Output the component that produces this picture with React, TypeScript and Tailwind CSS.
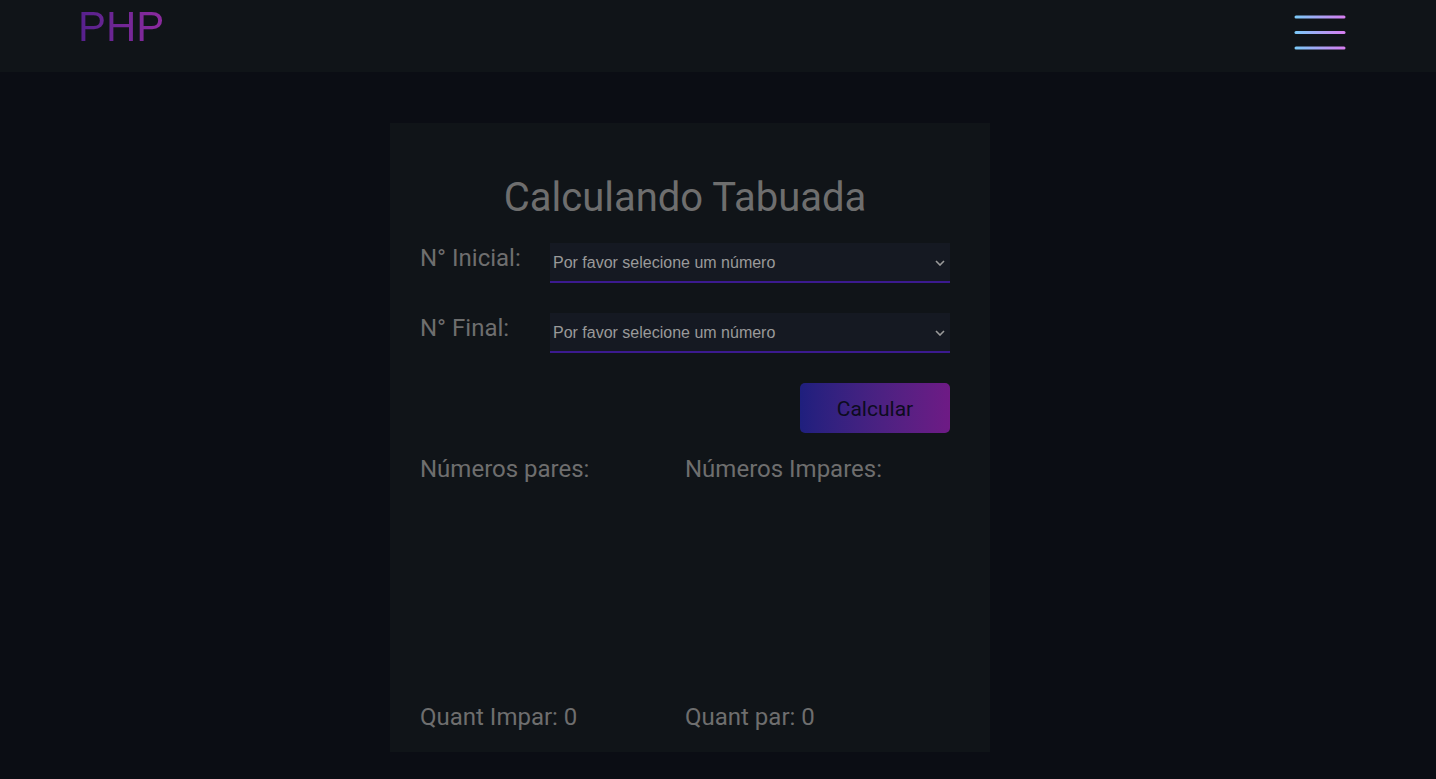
import React from "react";

function Burger() {
  return (
    <svg width="52" height="40" viewBox="0 0 52 40" className="block">
      <defs>
        <linearGradient id="burgerGrad" gradientUnits="userSpaceOnUse" x1="2" y1="0" x2="50" y2="0">
          <stop offset="0" stopColor="#7cc8f8" />
          <stop offset="1" stopColor="#d57ef0" />
        </linearGradient>
      </defs>
      <line x1="2" y1="5" x2="50" y2="5" stroke="url(#burgerGrad)" strokeWidth="3" strokeLinecap="round" />
      <line x1="2" y1="20.5" x2="50" y2="20.5" stroke="url(#burgerGrad)" strokeWidth="3" strokeLinecap="round" />
      <line x1="2" y1="36" x2="50" y2="36" stroke="url(#burgerGrad)" strokeWidth="3" strokeLinecap="round" />
    </svg>
  );
}

function Field({ label }: { label: string }) {
  return (
    <div className="flex items-start">
      <label className="w-[130px] pt-[1px] text-[24px] leading-[28px] text-[#6e6e6e]">{label}</label>
      <div className="relative w-[400px]">
        <select
          className="h-[40px] w-full appearance-none border-b-2 border-[#3b1a8f] bg-[#151922] pl-[3px] pt-[1px] text-[16px] text-[#9a9a9a] outline-none"
          style={{ fontFamily: '"Liberation Sans", Arial, sans-serif' }}
        >
          <option>Por favor selecione um número</option>
        </select>
        <svg
          width="10"
          height="6"
          viewBox="0 0 10 6"
          className="pointer-events-none absolute right-[5px] top-[17px]"
        >
          <path d="M1 1 L5 5 L9 1" fill="none" stroke="#9a9a9a" strokeWidth="1.6" />
        </svg>
      </div>
    </div>
  );
}

export default function App() {
  return (
    <div
      className="min-h-[779px] bg-[#0b0d14]"
      style={{ fontFamily: "Roboto, sans-serif" }}
    >
      <header className="flex h-[72px] items-start justify-between bg-[#101418] pl-[78px] pr-[90px]">
        <span
          className="mt-[3px] bg-gradient-to-r from-[#55208c] to-[#8d2a9e] bg-clip-text text-[42px] leading-[48px] text-transparent"
          style={{ fontFamily: '"Liberation Sans", Arial, sans-serif' }}
        >
          PHP
        </span>
        <div className="mt-[12px]">
          <Burger />
        </div>
      </header>

      <main className="flex justify-center pr-[56px] pt-[51px]">
        <div className="flex h-[629px] w-[600px] flex-col bg-[#101418] pl-[30px] pr-[40px] pt-[51px]">
          <h1 className="text-center text-[40px] leading-[48px] text-[#6e6e6e]">Calculando Tabuada</h1>
          <div className="mt-[21px] flex flex-col gap-[30px]">
            <Field label="N° Inicial:" />
            <Field label="N° Final:" />
          </div>
          <div className="mt-[30px] flex justify-end">
            <button className="h-[50px] w-[150px] rounded-[5px] bg-gradient-to-r from-[#1f1f7e] to-[#6e1a85] pt-[3px] text-[21px] text-[#0c0c1e]">
              Calcular
            </button>
          </div>
          <div className="mt-[22px] flex flex-1 flex-col">
            <div className="flex text-[24px] leading-[28px] text-[#6e6e6e]">
              <div className="w-[265px]">Números pares:</div>
              <div>Números Impares:</div>
            </div>
            <div className="flex-1" />
            <div className="mb-[21px] flex text-[24px] leading-[28px] text-[#6e6e6e]">
              <div className="w-[265px]">Quant Impar: 0</div>
              <div>Quant par: 0</div>
            </div>
          </div>
        </div>
      </main>
    </div>
  );
}
